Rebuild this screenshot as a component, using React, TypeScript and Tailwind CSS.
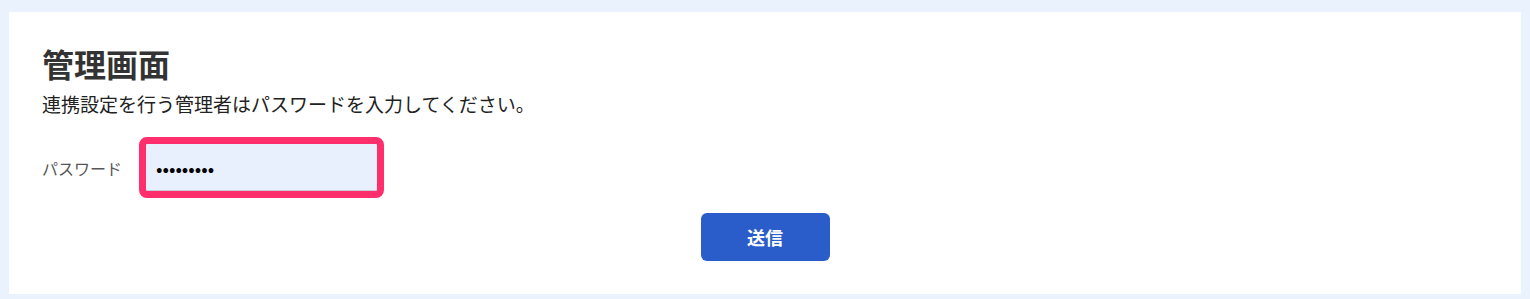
import React, { useState } from 'react';

const font = { fontFamily: '"Noto Sans CJK JP", "Noto Sans", sans-serif' };

const App = () => {
  const [password, setPassword] = useState('abcdefghi');

  return (
    <div className="min-h-[299px] bg-[#eaf2fe] pt-3 px-[9px] pb-[5px]" style={font}>
      <div className="bg-white pt-[27px] pb-[33px] px-[33px]">
        <h1 className="text-[32px] leading-[48px] font-bold text-[#333333]">管理画面</h1>
        <p className="mt-[3px] text-[19px] leading-[28px] text-[#222222]">
          連携設定を行う管理者はパスワードを入力してください。
        </p>

        <form className="mt-[19px]" onSubmit={(e) => e.preventDefault()}>
          <div className="flex items-center">
            <label htmlFor="password" className="w-[97px] text-[16px] text-[#555555]">
              パスワード
            </label>
            <input
              id="password"
              type="password"
              value={password}
              onChange={(e) => setPassword(e.target.value)}
              className="w-[245px] h-[61px] rounded-[8px] border-[7px] border-[#ff2e6c] bg-[#e8f0fe] pl-[10px] text-[19px] text-black shadow-[inset_0_-1px_0_#c9ccd3] outline-none"
            />
          </div>

          <div className="mt-[15px] flex justify-center">
            <button
              type="submit"
              className="w-[129px] h-[48px] rounded-[6px] bg-[#2a5dc9] text-white text-[18px] font-bold"
            >
              送信
            </button>
          </div>
        </form>
      </div>
    </div>
  );
};

export default App;
